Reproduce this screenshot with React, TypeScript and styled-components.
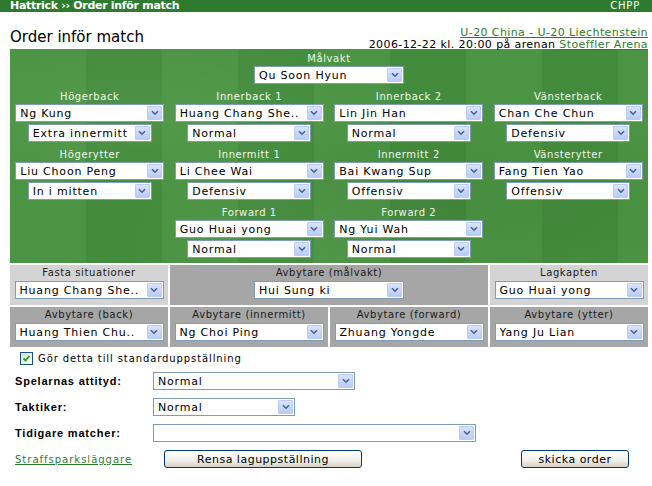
import React from "react";
import styled, { createGlobalStyle } from "styled-components";

const GlobalStyle = createGlobalStyle`
  html, body { margin: 0; padding: 0; background: #fff; }
  body { font-family: "DejaVu Sans", Verdana, sans-serif; color: #000; width: 652px; }
`;

const Page = styled.div`
  width: 652px;
  height: 486px;
  overflow: hidden;
`;

const TopBar = styled.div`
  height: 12px;
  background: #2e7b30;
  color: #fff;
  display: flex;
  justify-content: space-between;
  align-items: center;
  padding: 0 12px 0 10px;
  font-size: 11px;
  line-height: 12px;
`;

const Crumb = styled.span`
  font-weight: bold;
  letter-spacing: -0.3px;
`;

const Chpp = styled.span`
  font-size: 10px;
  letter-spacing: 0.8px;
`;

const Header = styled.div`
  display: flex;
  justify-content: space-between;
  align-items: flex-start;
  padding: 15px 4px 0 10px;
  height: 22px;
`;

const Title = styled.h1`
  margin: 1px 0 0 0;
  font-size: 15px;
  font-weight: normal;
  line-height: 18px;
`;

const MatchInfo = styled.div`
  text-align: right;
  font-size: 11px;
  line-height: 12px;
  letter-spacing: 0.4px;
`;

const Link = styled.a`
  color: #2e7b30;
  text-decoration: underline;
  cursor: pointer;
`;

const Field = styled.div`
  margin: 0 4px 0 10px;
  height: 214px;
  box-sizing: border-box;
  padding-top: 4px;
  background:
    radial-gradient(ellipse at 20% 30%, rgba(255,255,255,0.05), transparent 40%),
    radial-gradient(ellipse at 70% 70%, rgba(0,0,0,0.06), transparent 45%),
    radial-gradient(ellipse at 45% 90%, rgba(255,255,255,0.04), transparent 35%),
    repeating-linear-gradient(90deg, #4b9443 0px, #4b9443 76px, #448c3d 76px, #448c3d 152px);
  display: flex;
  flex-direction: column;
  gap: 7px;
`;

const GoalieRow = styled.div`
  display: flex;
  justify-content: center;
`;

const PositionGrid = styled.div`
  display: grid;
  grid-template-columns: repeat(4, 1fr);
  row-gap: 7px;
`;

const Position = styled.div`
  display: flex;
  flex-direction: column;
  align-items: center;
`;

const FieldLabel = styled.div`
  font-size: 10px;
  line-height: 12px;
  height: 12px;
  margin-bottom: 1px;
  color: #eef7ea;
  letter-spacing: 0.6px;
`;

const SelectBox = styled.div<{ $w: number; $gap?: number }>`
  display: flex;
  align-items: center;
  box-sizing: border-box;
  width: ${(p) => p.$w}px;
  height: 18px;
  margin-top: ${(p) => p.$gap ?? 0}px;
  border: 1px solid #7f9db9;
  background: #fff;
  padding: 0 1px 0 4px;
  font-size: 11px;
  color: #000;
`;

const SelectValue = styled.span`
  flex: 1;
  white-space: nowrap;
  overflow: hidden;
  letter-spacing: 0.8px;
`;

const ArrowBtn = styled.span`
  width: 15px;
  height: 14px;
  box-sizing: border-box;
  border: 1px solid #bccdf3;
  border-radius: 1px;
  background: linear-gradient(#d8e3fd, #b9cbf6);
  display: flex;
  align-items: center;
  justify-content: center;
`;

const Select: React.FC<{ value: string; w: number; gap?: number }> = ({ value, w, gap }) => (
  <SelectBox $w={w} $gap={gap}>
    <SelectValue>{value}</SelectValue>
    <ArrowBtn>
      <svg width="8" height="6" viewBox="0 0 8 6">
        <path d="M1 1.2 L4 4.2 L7 1.2" fill="none" stroke="#4d6185" strokeWidth="1.6" />
      </svg>
    </ArrowBtn>
  </SelectBox>
);

const SubsGrid = styled.div`
  margin: 2px 4px 0 10px;
  display: grid;
  grid-template-columns: repeat(4, 1fr);
  gap: 2px;
`;

const SubCell = styled.div<{ $light?: boolean; $span?: number }>`
  grid-column: span ${(p) => p.$span ?? 1};
  background: ${(p) => (p.$light ? "#d4d4d4" : "#a6a6a6")};
  height: 40px;
  box-sizing: border-box;
  padding-top: 2px;
  display: flex;
  flex-direction: column;
  align-items: center;
`;

const SubLabel = styled.div`
  font-size: 10px;
  line-height: 12px;
  height: 12px;
  margin-bottom: 2px;
  color: #1a1a1a;
  letter-spacing: 0.6px;
`;

const Form = styled.div`
  padding: 3px 0 0 15px;
`;

const CheckRow = styled.label`
  display: flex;
  align-items: center;
  gap: 5px;
  height: 16px;
  margin: 0 0 6px 5px;
  font-size: 10px;
  letter-spacing: 0.9px;
`;

const CheckBox = styled.span`
  width: 11px;
  height: 11px;
  border: 1px solid #1c5180;
  background: linear-gradient(135deg, #dcdcd7, #fff);
  display: flex;
  align-items: center;
  justify-content: center;
`;

const FormRow = styled.div`
  display: flex;
  align-items: center;
  height: 18px;
  margin-bottom: 8px;
`;

const FormLabel = styled.div`
  width: 138px;
  font-family: "Liberation Sans", Arial, sans-serif;
  font-weight: bold;
  font-size: 11px;
  letter-spacing: 0.8px;
`;

const ActionRow = styled.div`
  display: flex;
  align-items: center;
  height: 18px;
`;

const PenaltyLink = styled(Link)`
  width: 149px;
  font-size: 10px;
  letter-spacing: 1px;
`;

const Button = styled.button<{ $w: number; $ml?: number }>`
  width: ${(p) => p.$w}px;
  height: 18px;
  margin-left: ${(p) => p.$ml ?? 0}px;
  box-sizing: border-box;
  border: 1px solid #003c74;
  border-radius: 3px;
  background: linear-gradient(#ffffff, #f0f0ea 60%, #d6d0c5);
  font-family: "DejaVu Sans", sans-serif;
  font-size: 11px;
  letter-spacing: 0.5px;
  padding: 0;
  color: #000;
`;

const rows = [
  [
    { label: "Högerback", name: "Ng Kung", order: "Extra innermitt" },
    { label: "Innerback 1", name: "Huang Chang She..", order: "Normal" },
    { label: "Innerback 2", name: "Lin Jin Han", order: "Normal" },
    { label: "Vänsterback", name: "Chan Che Chun", order: "Defensiv" },
  ],
  [
    { label: "Högerytter", name: "Liu Choon Peng", order: "In i mitten" },
    { label: "Innermitt 1", name: "Li Chee Wai", order: "Defensiv" },
    { label: "Innermitt 2", name: "Bai Kwang Sup", order: "Offensiv" },
    { label: "Vänsterytter", name: "Fang Tien Yao", order: "Offensiv" },
  ],
  [
    null,
    { label: "Forward 1", name: "Guo Huai yong", order: "Normal" },
    { label: "Forward 2", name: "Ng Yui Wah", order: "Normal" },
    null,
  ],
];

export default function App() {
  return (
    <Page>
      <GlobalStyle />
      <TopBar>
        <Crumb>Hattrick ›› Order inför match</Crumb>
        <Chpp>CHPP</Chpp>
      </TopBar>
      <Header>
        <Title>Order inför match</Title>
        <MatchInfo>
          <Link>U-20 China - U-20 Liechtenstein</Link>
          <br />
          2006-12-22 kl. 20:00 på arenan <Link>Stoeffler Arena</Link>
        </MatchInfo>
      </Header>
      <Field>
        <GoalieRow>
          <Position>
            <FieldLabel>Målvakt</FieldLabel>
            <Select value="Qu Soon Hyun" w={150} />
          </Position>
        </GoalieRow>
        <PositionGrid>
          {rows.flat().map((p, i) =>
            p ? (
              <Position key={i}>
                <FieldLabel>{p.label}</FieldLabel>
                <Select value={p.name} w={149} />
                <Select value={p.order} w={124} gap={2} />
              </Position>
            ) : (
              <div key={i} />
            )
          )}
        </PositionGrid>
      </Field>
      <SubsGrid>
        <SubCell $light>
          <SubLabel>Fasta situationer</SubLabel>
          <Select value="Huang Chang She.." w={149} />
        </SubCell>
        <SubCell $span={2}>
          <SubLabel>Avbytare (målvakt)</SubLabel>
          <Select value="Hui Sung ki" w={150} />
        </SubCell>
        <SubCell $light>
          <SubLabel>Lagkapten</SubLabel>
          <Select value="Guo Huai yong" w={149} />
        </SubCell>
        <SubCell>
          <SubLabel>Avbytare (back)</SubLabel>
          <Select value="Huang Thien Chu.." w={149} />
        </SubCell>
        <SubCell>
          <SubLabel>Avbytare (innermitt)</SubLabel>
          <Select value="Ng Choi Ping" w={149} />
        </SubCell>
        <SubCell>
          <SubLabel>Avbytare (forward)</SubLabel>
          <Select value="Zhuang Yongde" w={149} />
        </SubCell>
        <SubCell>
          <SubLabel>Avbytare (ytter)</SubLabel>
          <Select value="Yang Ju Lian" w={149} />
        </SubCell>
      </SubsGrid>
      <Form>
        <CheckRow>
          <CheckBox>
            <svg width="9" height="9" viewBox="0 0 9 9">
              <path d="M1.5 4.5 L3.5 6.5 L7.5 2" fill="none" stroke="#21a121" strokeWidth="1.8" />
            </svg>
          </CheckBox>
          Gör detta till standarduppställning
        </CheckRow>
        <FormRow>
          <FormLabel>Spelarnas attityd:</FormLabel>
          <Select value="Normal" w={202} />
        </FormRow>
        <FormRow>
          <FormLabel>Taktiker:</FormLabel>
          <Select value="Normal" w={142} />
        </FormRow>
        <FormRow>
          <FormLabel>Tidigare matcher:</FormLabel>
          <Select value="" w={323} />
        </FormRow>
        <ActionRow>
          <PenaltyLink>Straffsparksläggare</PenaltyLink>
          <Button $w={198}>Rensa laguppställning</Button>
          <Button $w={108} $ml={159}>skicka order</Button>
        </ActionRow>
      </Form>
    </Page>
  );
}
